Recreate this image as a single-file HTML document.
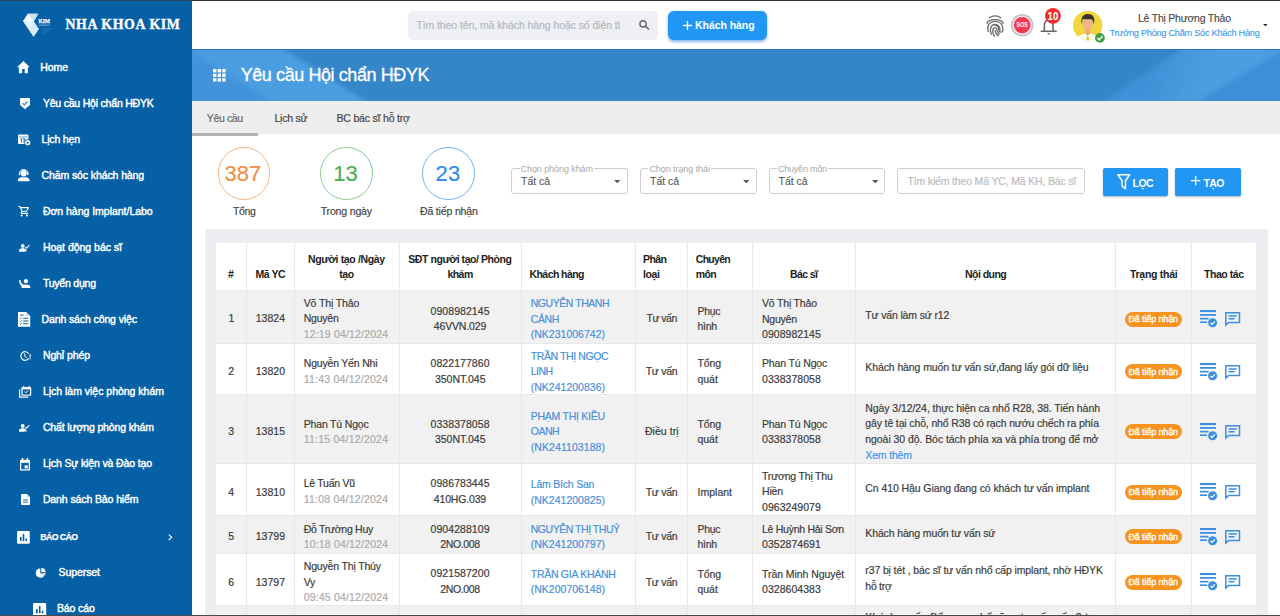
<!DOCTYPE html>
<html lang="vi">
<head>
<meta charset="utf-8">
<title>Yêu cầu Hội chẩn HĐYK</title>
<style>
*{box-sizing:border-box;margin:0;padding:0}
html,body{width:1280px;height:616px;overflow:hidden;background:#fff;font-family:"Liberation Sans",sans-serif;color:#333}
#app{position:relative;width:1280px;height:616px;overflow:hidden;background:#fff}
.abs{position:absolute}
.t{position:absolute;white-space:nowrap;line-height:16px;height:16px}
svg{position:absolute;overflow:visible}

</style>
</head>
<body>
<div id="app">
<div class="abs" style="left:0px;top:0px;width:192px;height:616px;background:#0560a6;"></div>
<div class="abs" style="left:192px;top:49px;width:1088px;height:51.6px;background:#3586c9;overflow:hidden"><svg width="1088" height="51" viewBox="0 0 1088 51" style="left:0;top:0"><defs><filter id="bl" x="-5%" y="-50%" width="110%" height="200%"><feGaussianBlur stdDeviation="2.2"/></filter><linearGradient id="gl" gradientUnits="userSpaceOnUse" x1="60" y1="30" x2="110" y2="10"><stop offset="0" stop-color="#4c9ee2"/><stop offset="1" stop-color="#3f90d6"/></linearGradient><linearGradient id="gr" gradientUnits="userSpaceOnUse" x1="960" y1="20" x2="1010" y2="40"><stop offset="0" stop-color="#4091d7"/><stop offset="1" stop-color="#4c9ee2"/></linearGradient></defs><g filter="url(#bl)"><polygon points="-10,-10 76,-10 180,56 -10,56" fill="#4b9de1"/><polygon points="-10,-4 85,56 -10,56" fill="#4394da"/><polygon points="907,56 998,-6 1100,-6 1100,56" fill="url(#gr)"/><polygon points="1000,56 1100,-4 1100,56" fill="#3e8fd7"/></g></svg></div>
<div class="abs" style="left:192px;top:49px;width:1088px;height:1px;background:#2f78b8;"></div>
<div class="abs" style="left:192px;top:100.6px;width:1088px;height:33.8px;background:#eeeeee;"></div>
<div class="abs" style="left:192px;top:133.4px;width:66px;height:2.4px;background:#b2b2b2;"></div>
<div class="abs" style="left:204.5px;top:228.5px;width:1063px;height:400px;background:#eceef1;"></div>
<div class="t " style="left:65.40px;top:17.00px;font-size:13.8px;color:#fff;letter-spacing:0.651px;font-weight:700;font-family:'Liberation Serif',serif;-webkit-text-stroke:0.35px #fff;">NHA KHOA KIM</div>
<div class="t " style="left:40.30px;top:59.00px;font-size:10.5px;color:#fff;letter-spacing:-0.092px;-webkit-text-stroke:0.42px #fff;">Home</div>
<div class="t " style="left:42.90px;top:95.00px;font-size:10.5px;color:#fff;letter-spacing:-0.204px;-webkit-text-stroke:0.42px #fff;">Yêu cầu Hội chẩn HĐYK</div>
<div class="t " style="left:41.50px;top:131.00px;font-size:10.5px;color:#fff;letter-spacing:-0.171px;-webkit-text-stroke:0.42px #fff;">Lịch hẹn</div>
<div class="t " style="left:41.50px;top:167.00px;font-size:10.5px;color:#fff;letter-spacing:-0.099px;-webkit-text-stroke:0.42px #fff;">Chăm sóc khách hàng</div>
<div class="t " style="left:42.90px;top:203.00px;font-size:10.5px;color:#fff;letter-spacing:-0.021px;-webkit-text-stroke:0.42px #fff;">Đơn hàng Implant/Labo</div>
<div class="t " style="left:42.90px;top:239.00px;font-size:10.5px;color:#fff;letter-spacing:-0.019px;-webkit-text-stroke:0.42px #fff;">Hoạt động bác sĩ</div>
<div class="t " style="left:42.90px;top:275.00px;font-size:10.5px;color:#fff;letter-spacing:-0.219px;-webkit-text-stroke:0.42px #fff;">Tuyển dụng</div>
<div class="t " style="left:41.50px;top:311.00px;font-size:10.5px;color:#fff;letter-spacing:-0.110px;-webkit-text-stroke:0.42px #fff;">Danh sách công việc</div>
<div class="t " style="left:42.90px;top:347.00px;font-size:10.5px;color:#fff;letter-spacing:-0.096px;-webkit-text-stroke:0.42px #fff;">Nghỉ phép</div>
<div class="t " style="left:42.90px;top:383.00px;font-size:10.5px;color:#fff;letter-spacing:-0.013px;-webkit-text-stroke:0.42px #fff;">Lịch làm việc phòng khám</div>
<div class="t " style="left:42.90px;top:419.00px;font-size:10.5px;color:#fff;letter-spacing:-0.132px;-webkit-text-stroke:0.42px #fff;">Chất lượng phòng khám</div>
<div class="t " style="left:42.90px;top:455.00px;font-size:10.5px;color:#fff;letter-spacing:-0.136px;-webkit-text-stroke:0.42px #fff;">Lịch Sự kiện và Đào tạo</div>
<div class="t " style="left:42.90px;top:491.00px;font-size:10.5px;color:#fff;letter-spacing:-0.105px;-webkit-text-stroke:0.42px #fff;">Danh sách Bảo hiểm</div>
<div class="t " style="left:40.30px;top:529.00px;font-size:8.8px;color:#fff;letter-spacing:-0.609px;font-weight:700;-webkit-text-stroke:0.25px #fff;">BÁO CÁO</div>
<div class="t " style="left:58.50px;top:563.80px;font-size:10.5px;color:#fff;letter-spacing:-0.075px;-webkit-text-stroke:0.42px #fff;">Superset</div>
<div class="t " style="left:56.90px;top:600.00px;font-size:10.5px;color:#fff;letter-spacing:-0.105px;-webkit-text-stroke:0.42px #fff;">Báo cáo</div>
<div class="abs" style="left:408px;top:11px;width:250px;height:29px;background:#eef0f5;border-radius:5px;"></div>
<div class="t " style="left:416.30px;top:17.00px;font-size:10.5px;color:#b4b8bd;letter-spacing:-0.084px;-webkit-text-stroke:0.18px #b4b8bd;">Tìm theo tên, mã khách hàng hoặc số điện tl</div>
<div class="abs" style="left:668px;top:10.8px;width:99px;height:29.5px;background:#2196f3;border-radius:6px;box-shadow:0 1.5px 3px rgba(33,120,220,.55);"></div>
<div class="t " style="left:695.00px;top:17.00px;font-size:10.5px;color:#fff;letter-spacing:-0.054px;font-weight:700;">Khách hàng</div>
<div class="t " style="left:1138.00px;top:10.00px;font-size:10.5px;color:#444;letter-spacing:-0.236px;-webkit-text-stroke:0.1px #444;">Lê Thị Phương Thảo</div>
<div class="t " style="left:1109.50px;top:25.00px;font-size:9.2px;color:#3a98ea;letter-spacing:-0.262px;-webkit-text-stroke:0.1px #3a98ea;">Trưởng Phòng Chăm Sóc Khách Hàng</div>
<div class="t " style="left:240.70px;top:67.00px;font-size:18px;color:#fff;letter-spacing:-0.416px;-webkit-text-stroke:0.3px #fff;line-height:24px;height:24px;margin-top:-4px;">Yêu cầu Hội chẩn HĐYK</div>
<div class="t " style="left:206.80px;top:109.70px;font-size:10.5px;color:#666;letter-spacing:-0.355px;-webkit-text-stroke:0.18px #666;">Yêu cầu</div>
<div class="t " style="left:274.50px;top:109.70px;font-size:10.5px;color:#444;letter-spacing:-0.243px;-webkit-text-stroke:0.18px #444;">Lịch sử</div>
<div class="t " style="left:336.50px;top:109.70px;font-size:10.5px;color:#444;letter-spacing:-0.189px;-webkit-text-stroke:0.18px #444;">BC bác sĩ hỗ trợ</div>
<div class="abs" style="left:217.75px;top:147.25px;width:52.5px;height:52.5px;border:1px solid #ef8f45;opacity:.65;border-radius:50%"></div>
<div class="t " style="left:224.60px;top:166.20px;font-size:22px;color:#ef8f45;letter-spacing:-0.036px;-webkit-text-stroke:0.18px #ef8f45;line-height:30px;height:30px;margin-top:-7px;">387</div>
<div class="t " style="left:233.00px;top:203.00px;font-size:10.5px;color:#444;letter-spacing:-0.332px;-webkit-text-stroke:0.18px #444;">Tổng</div>
<div class="abs" style="left:320.0px;top:147.25px;width:52.5px;height:52.5px;border:1px solid #4caf50;opacity:.65;border-radius:50%"></div>
<div class="t " style="left:333.20px;top:166.20px;font-size:22px;color:#4caf50;letter-spacing:-0.036px;-webkit-text-stroke:0.18px #4caf50;line-height:30px;height:30px;margin-top:-7px;">13</div>
<div class="t " style="left:320.75px;top:203.00px;font-size:10.5px;color:#444;letter-spacing:-0.164px;-webkit-text-stroke:0.18px #444;">Trong ngày</div>
<div class="abs" style="left:422.0px;top:147.25px;width:52.5px;height:52.5px;border:1px solid #2e8be6;opacity:.65;border-radius:50%"></div>
<div class="t " style="left:435.60px;top:166.20px;font-size:22px;color:#2e8be6;letter-spacing:0.204px;-webkit-text-stroke:0.18px #2e8be6;line-height:30px;height:30px;margin-top:-7px;">23</div>
<div class="t " style="left:420.00px;top:203.00px;font-size:10.5px;color:#444;letter-spacing:-0.163px;-webkit-text-stroke:0.18px #444;">Đã tiếp nhận</div>
<div class="abs" style="left:511.25px;top:168.4px;width:116.25px;height:25.2px;border:1px solid #cdcdcd;border-radius:3px"></div>
<div class="abs" style="left:519.6px;top:167px;width:74.39999999999998px;height:4px;background:#fff;"></div>
<div class="t " style="left:520.60px;top:161.40px;font-size:9px;color:#adadad;letter-spacing:-0.083px;-webkit-text-stroke:0.05px #adadad;">Chọn phòng khám</div>
<div class="t " style="left:521.00px;top:173.00px;font-size:10.5px;color:#555;letter-spacing:-0.036px;-webkit-text-stroke:0.1px #555;">Tất cả</div>
<svg style="left:614.0px;top:179.7px" width="6.5" height="3.2" viewBox="0 0 10 5"><path d="M0 0h10L5 5z" fill="#555"/></svg>
<div class="abs" style="left:640.3px;top:168.4px;width:116.25px;height:25.2px;border:1px solid #cdcdcd;border-radius:3px"></div>
<div class="abs" style="left:648.4px;top:167px;width:62.60000000000002px;height:4px;background:#fff;"></div>
<div class="t " style="left:649.40px;top:161.40px;font-size:9px;color:#adadad;letter-spacing:-0.067px;-webkit-text-stroke:0.05px #adadad;">Chọn trạng thái</div>
<div class="t " style="left:650.05px;top:173.00px;font-size:10.5px;color:#555;letter-spacing:-0.036px;-webkit-text-stroke:0.1px #555;">Tất cả</div>
<svg style="left:743.05px;top:179.7px" width="6.5" height="3.2" viewBox="0 0 10 5"><path d="M0 0h10L5 5z" fill="#555"/></svg>
<div class="abs" style="left:768.75px;top:168.4px;width:116.25px;height:25.2px;border:1px solid #cdcdcd;border-radius:3px"></div>
<div class="abs" style="left:777px;top:167px;width:51px;height:4px;background:#fff;"></div>
<div class="t " style="left:778.00px;top:161.40px;font-size:9px;color:#adadad;letter-spacing:-0.226px;-webkit-text-stroke:0.05px #adadad;">Chuyên môn</div>
<div class="t " style="left:778.50px;top:173.00px;font-size:10.5px;color:#555;letter-spacing:-0.036px;-webkit-text-stroke:0.1px #555;">Tất cả</div>
<svg style="left:871.5px;top:179.7px" width="6.5" height="3.2" viewBox="0 0 10 5"><path d="M0 0h10L5 5z" fill="#555"/></svg>
<div class="abs" style="left:897.2px;top:168.4px;width:187.5px;height:25.2px;border:1px solid #cdcdcd;border-radius:3px"></div>
<div class="t " style="left:907.50px;top:173.00px;font-size:10.5px;color:#bbb;letter-spacing:-0.168px;-webkit-text-stroke:0.18px #bbb;">Tìm kiếm theo Mã YC, Mã KH, Bác sĩ</div>
<div class="abs" style="left:1102.8px;top:168px;width:65.6px;height:27.5px;background:#2196f3;border-radius:2px;box-shadow:0 1px 2px rgba(0,0,0,.3);"></div>
<div class="abs" style="left:1174.7px;top:168px;width:65.9px;height:27.5px;background:#2196f3;border-radius:2px;box-shadow:0 1px 2px rgba(0,0,0,.3);"></div>
<div class="t " style="left:1132.60px;top:175.00px;font-size:10.5px;color:#fff;letter-spacing:-0.570px;font-weight:700;">LỌC</div>
<div class="t " style="left:1203.40px;top:175.00px;font-size:10.5px;color:#fff;letter-spacing:-0.570px;font-weight:700;">TẠO</div>
<div class="abs" style="left:215.75px;top:243px;width:1040.5px;height:47px;background:#fff;"></div>
<div class="abs" style="left:215.75px;top:290px;width:1040.5px;height:53px;background:#f1f1f1;"></div>
<div class="abs" style="left:215.75px;top:343px;width:1040.5px;height:51.75px;background:#fff;"></div>
<div class="abs" style="left:215.75px;top:394.75px;width:1040.5px;height:68.64999999999998px;background:#f1f1f1;"></div>
<div class="abs" style="left:215.75px;top:463.4px;width:1040.5px;height:51.89999999999998px;background:#fff;"></div>
<div class="abs" style="left:215.75px;top:515.3px;width:1040.5px;height:37.700000000000045px;background:#f1f1f1;"></div>
<div class="abs" style="left:215.75px;top:553px;width:1040.5px;height:52.39999999999998px;background:#fff;"></div>
<div class="abs" style="left:215.75px;top:605.4px;width:1040.5px;height:54.60000000000002px;background:#f1f1f1;"></div>
<div class="abs" style="left:245.75px;top:243px;width:1px;height:400px;background:#e8e8e8;"></div>
<div class="abs" style="left:294.0px;top:243px;width:1px;height:400px;background:#e8e8e8;"></div>
<div class="abs" style="left:398.75px;top:243px;width:1px;height:400px;background:#e8e8e8;"></div>
<div class="abs" style="left:520.75px;top:243px;width:1px;height:400px;background:#e8e8e8;"></div>
<div class="abs" style="left:634.5px;top:243px;width:1px;height:400px;background:#e8e8e8;"></div>
<div class="abs" style="left:687.0px;top:243px;width:1px;height:400px;background:#e8e8e8;"></div>
<div class="abs" style="left:752.0px;top:243px;width:1px;height:400px;background:#e8e8e8;"></div>
<div class="abs" style="left:854.5px;top:243px;width:1px;height:400px;background:#e8e8e8;"></div>
<div class="abs" style="left:1115.0px;top:243px;width:1px;height:400px;background:#e8e8e8;"></div>
<div class="abs" style="left:1190.5px;top:243px;width:1px;height:400px;background:#e8e8e8;"></div>
<div class="abs" style="left:215.75px;top:289.5px;width:1040.5px;height:1px;background:#e8e8e8;"></div>
<div class="abs" style="left:215.75px;top:342.5px;width:1040.5px;height:1px;background:#e8e8e8;"></div>
<div class="abs" style="left:215.75px;top:394.25px;width:1040.5px;height:1px;background:#e8e8e8;"></div>
<div class="abs" style="left:215.75px;top:462.9px;width:1040.5px;height:1px;background:#e8e8e8;"></div>
<div class="abs" style="left:215.75px;top:514.8px;width:1040.5px;height:1px;background:#e8e8e8;"></div>
<div class="abs" style="left:215.75px;top:552.5px;width:1040.5px;height:1px;background:#e8e8e8;"></div>
<div class="abs" style="left:215.75px;top:604.9px;width:1040.5px;height:1px;background:#e8e8e8;"></div>
<div class="t " style="left:228.00px;top:266.25px;font-size:10.5px;color:#222;font-weight:700;">#</div>
<div class="t " style="left:255.50px;top:266.25px;font-size:10.5px;color:#222;letter-spacing:-0.475px;font-weight:700;">Mã YC</div>
<div class="t " style="left:308.00px;top:250.75px;font-size:10.5px;color:#222;letter-spacing:-0.369px;font-weight:700;">Người tạo /Ngày</div>
<div class="t " style="left:339.25px;top:266.25px;font-size:10.5px;color:#222;letter-spacing:-0.375px;font-weight:700;">tạo</div>
<div class="t " style="left:408.25px;top:250.75px;font-size:10.5px;color:#222;letter-spacing:-0.429px;font-weight:700;">SĐT người tạo/ Phòng</div>
<div class="t " style="left:447.50px;top:266.25px;font-size:10.5px;color:#222;letter-spacing:-0.570px;font-weight:700;">khám</div>
<div class="t " style="left:529.50px;top:266.25px;font-size:10.5px;color:#222;letter-spacing:-0.566px;font-weight:700;">Khách hàng</div>
<div class="t " style="left:643.00px;top:250.75px;font-size:10.5px;color:#222;letter-spacing:-0.570px;font-weight:700;">Phân</div>
<div class="t " style="left:643.00px;top:266.25px;font-size:10.5px;color:#222;letter-spacing:-0.363px;font-weight:700;">loại</div>
<div class="t " style="left:695.75px;top:250.75px;font-size:10.5px;color:#222;letter-spacing:-0.701px;font-weight:700;">Chuyên</div>
<div class="t " style="left:695.75px;top:266.25px;font-size:10.5px;color:#222;letter-spacing:-0.570px;font-weight:700;">môn</div>
<div class="t " style="left:790.00px;top:266.25px;font-size:10.5px;color:#222;letter-spacing:-0.588px;font-weight:700;">Bác sĩ</div>
<div class="t " style="left:965.00px;top:266.25px;font-size:10.5px;color:#222;letter-spacing:-0.534px;font-weight:700;">Nội dung</div>
<div class="t " style="left:1130.00px;top:266.25px;font-size:10.5px;color:#222;letter-spacing:-0.286px;font-weight:700;">Trạng thái</div>
<div class="t " style="left:1204.00px;top:266.25px;font-size:10.5px;color:#222;letter-spacing:-0.454px;font-weight:700;">Thao tác</div>
<div class="t " style="left:228.60px;top:309.60px;font-size:10.5px;color:#3a3a3a;-webkit-text-stroke:0.18px #3a3a3a;">1</div>
<div class="t " style="left:255.75px;top:309.60px;font-size:10.5px;color:#3a3a3a;letter-spacing:0.013px;-webkit-text-stroke:0.18px #3a3a3a;">13824</div>
<div class="t " style="left:303.75px;top:294.90px;font-size:10.5px;color:#3a3a3a;letter-spacing:-0.132px;-webkit-text-stroke:0.18px #3a3a3a;">Võ Thị Thảo</div>
<div class="t " style="left:303.75px;top:310.10px;font-size:10.5px;color:#3a3a3a;letter-spacing:-0.238px;-webkit-text-stroke:0.18px #3a3a3a;">Nguyên</div>
<div class="t " style="left:303.75px;top:326.25px;font-size:10.5px;color:#aaa;letter-spacing:0.167px;-webkit-text-stroke:0.18px #aaa;">12:19 04/12/2024</div>
<div class="t " style="left:430.50px;top:302.75px;font-size:10.5px;color:#3a3a3a;letter-spacing:0.067px;-webkit-text-stroke:0.18px #3a3a3a;">0908982145</div>
<div class="t " style="left:433.75px;top:318.25px;font-size:10.5px;color:#3a3a3a;letter-spacing:-0.151px;-webkit-text-stroke:0.18px #3a3a3a;">46VVN.029</div>
<div class="t " style="left:530.75px;top:295.25px;font-size:10.5px;color:#4790da;letter-spacing:-0.460px;-webkit-text-stroke:0.18px #4790da;">NGUYỄN THANH</div>
<div class="t " style="left:530.75px;top:310.75px;font-size:10.5px;color:#4790da;letter-spacing:-0.417px;-webkit-text-stroke:0.18px #4790da;">CẢNH</div>
<div class="t " style="left:530.75px;top:326.25px;font-size:10.5px;color:#4790da;letter-spacing:0.009px;-webkit-text-stroke:0.18px #4790da;">(NK231006742)</div>
<div class="t " style="left:646.60px;top:309.60px;font-size:10.5px;color:#3a3a3a;letter-spacing:-0.528px;-webkit-text-stroke:0.18px #3a3a3a;">Tư vấn</div>
<div class="t " style="left:697.50px;top:302.75px;font-size:10.5px;color:#3a3a3a;letter-spacing:-0.311px;-webkit-text-stroke:0.18px #3a3a3a;">Phục</div>
<div class="t " style="left:697.50px;top:318.25px;font-size:10.5px;color:#3a3a3a;letter-spacing:-0.270px;-webkit-text-stroke:0.18px #3a3a3a;">hình</div>
<div class="t " style="left:762.00px;top:295.25px;font-size:10.5px;color:#3a3a3a;letter-spacing:-0.182px;-webkit-text-stroke:0.18px #3a3a3a;">Võ Thị Thảo</div>
<div class="t " style="left:762.00px;top:310.75px;font-size:10.5px;color:#3a3a3a;letter-spacing:-0.238px;-webkit-text-stroke:0.18px #3a3a3a;">Nguyên</div>
<div class="t " style="left:762.00px;top:326.25px;font-size:10.5px;color:#3a3a3a;letter-spacing:0.039px;-webkit-text-stroke:0.18px #3a3a3a;">0908982145</div>
<div class="t " style="left:865.30px;top:307.00px;font-size:10.5px;color:#3a3a3a;letter-spacing:-0.154px;-webkit-text-stroke:0.18px #3a3a3a;">Tư vấn làm sứ r12</div>
<div class="abs" style="left:1124.75px;top:311.5px;width:57.2px;height:15px;background:#f7931e;border-radius:8px;"></div>
<div class="t " style="left:1128.50px;top:311.00px;font-size:9px;color:#fff;letter-spacing:-0.140px;-webkit-text-stroke:0.3px #fff;">Đã tiếp nhận</div>
<div class="t " style="left:228.25px;top:363.00px;font-size:10.5px;color:#3a3a3a;-webkit-text-stroke:0.18px #3a3a3a;">2</div>
<div class="t " style="left:255.75px;top:363.00px;font-size:10.5px;color:#3a3a3a;letter-spacing:0.013px;-webkit-text-stroke:0.18px #3a3a3a;">13820</div>
<div class="t " style="left:303.75px;top:355.00px;font-size:10.5px;color:#3a3a3a;letter-spacing:-0.194px;-webkit-text-stroke:0.18px #3a3a3a;">Nguyễn Yến Nhi</div>
<div class="t " style="left:303.75px;top:371.00px;font-size:10.5px;color:#aaa;letter-spacing:0.219px;-webkit-text-stroke:0.18px #aaa;">11:43 04/12/2024</div>
<div class="t " style="left:430.50px;top:355.00px;font-size:10.5px;color:#3a3a3a;letter-spacing:0.067px;-webkit-text-stroke:0.18px #3a3a3a;">0822177860</div>
<div class="t " style="left:435.00px;top:371.00px;font-size:10.5px;color:#3a3a3a;letter-spacing:-0.036px;-webkit-text-stroke:0.18px #3a3a3a;">350NT.045</div>
<div class="t " style="left:530.75px;top:347.50px;font-size:10.5px;color:#4790da;letter-spacing:-0.408px;-webkit-text-stroke:0.18px #4790da;">TRẦN THỊ NGỌC</div>
<div class="t " style="left:530.75px;top:363.00px;font-size:10.5px;color:#4790da;letter-spacing:-0.520px;-webkit-text-stroke:0.18px #4790da;">LINH</div>
<div class="t " style="left:530.75px;top:378.50px;font-size:10.5px;color:#4790da;letter-spacing:0.009px;-webkit-text-stroke:0.18px #4790da;">(NK241200836)</div>
<div class="t " style="left:645.75px;top:363.00px;font-size:10.5px;color:#3a3a3a;letter-spacing:-0.308px;-webkit-text-stroke:0.18px #3a3a3a;">Tư vấn</div>
<div class="t " style="left:697.50px;top:355.00px;font-size:10.5px;color:#3a3a3a;letter-spacing:-0.092px;-webkit-text-stroke:0.18px #3a3a3a;">Tổng</div>
<div class="t " style="left:697.50px;top:371.00px;font-size:10.5px;color:#3a3a3a;letter-spacing:-0.030px;-webkit-text-stroke:0.18px #3a3a3a;">quát</div>
<div class="t " style="left:762.00px;top:355.00px;font-size:10.5px;color:#3a3a3a;letter-spacing:-0.149px;-webkit-text-stroke:0.18px #3a3a3a;">Phan Tú Ngọc</div>
<div class="t " style="left:762.00px;top:371.00px;font-size:10.5px;color:#3a3a3a;letter-spacing:0.039px;-webkit-text-stroke:0.18px #3a3a3a;">0338378058</div>
<div class="t " style="left:865.30px;top:359.00px;font-size:10.5px;color:#3a3a3a;letter-spacing:-0.101px;-webkit-text-stroke:0.18px #3a3a3a;">Khách hàng muốn tư vấn sứ,đang lấy gói dữ liệu</div>
<div class="abs" style="left:1124.75px;top:364.0px;width:57.2px;height:15px;background:#f7931e;border-radius:8px;"></div>
<div class="t " style="left:1128.50px;top:363.50px;font-size:9px;color:#fff;letter-spacing:-0.140px;-webkit-text-stroke:0.3px #fff;">Đã tiếp nhận</div>
<div class="t " style="left:228.25px;top:423.00px;font-size:10.5px;color:#3a3a3a;-webkit-text-stroke:0.18px #3a3a3a;">3</div>
<div class="t " style="left:255.75px;top:423.00px;font-size:10.5px;color:#3a3a3a;letter-spacing:0.013px;-webkit-text-stroke:0.18px #3a3a3a;">13815</div>
<div class="t " style="left:303.75px;top:415.50px;font-size:10.5px;color:#3a3a3a;letter-spacing:-0.176px;-webkit-text-stroke:0.18px #3a3a3a;">Phan Tú Ngọc</div>
<div class="t " style="left:303.75px;top:431.00px;font-size:10.5px;color:#aaa;letter-spacing:0.219px;-webkit-text-stroke:0.18px #aaa;">11:15 04/12/2024</div>
<div class="t " style="left:430.50px;top:415.50px;font-size:10.5px;color:#3a3a3a;letter-spacing:0.067px;-webkit-text-stroke:0.18px #3a3a3a;">0338378058</div>
<div class="t " style="left:435.00px;top:431.00px;font-size:10.5px;color:#3a3a3a;letter-spacing:-0.036px;-webkit-text-stroke:0.18px #3a3a3a;">350NT.045</div>
<div class="t " style="left:530.75px;top:407.50px;font-size:10.5px;color:#4790da;letter-spacing:-0.263px;-webkit-text-stroke:0.18px #4790da;">PHẠM THỊ KIỀU</div>
<div class="t " style="left:530.75px;top:423.00px;font-size:10.5px;color:#4790da;letter-spacing:-0.520px;-webkit-text-stroke:0.18px #4790da;">OANH</div>
<div class="t " style="left:530.75px;top:438.50px;font-size:10.5px;color:#4790da;letter-spacing:0.074px;-webkit-text-stroke:0.18px #4790da;">(NK241103188)</div>
<div class="t " style="left:645.00px;top:423.00px;font-size:10.5px;color:#3a3a3a;letter-spacing:0.035px;-webkit-text-stroke:0.18px #3a3a3a;">Điều trị</div>
<div class="t " style="left:697.50px;top:415.50px;font-size:10.5px;color:#3a3a3a;letter-spacing:-0.092px;-webkit-text-stroke:0.18px #3a3a3a;">Tổng</div>
<div class="t " style="left:697.50px;top:431.00px;font-size:10.5px;color:#3a3a3a;letter-spacing:-0.030px;-webkit-text-stroke:0.18px #3a3a3a;">quát</div>
<div class="t " style="left:762.00px;top:415.50px;font-size:10.5px;color:#3a3a3a;letter-spacing:-0.149px;-webkit-text-stroke:0.18px #3a3a3a;">Phan Tú Ngọc</div>
<div class="t " style="left:762.00px;top:431.00px;font-size:10.5px;color:#3a3a3a;letter-spacing:0.039px;-webkit-text-stroke:0.18px #3a3a3a;">0338378058</div>
<div class="t " style="left:865.30px;top:399.70px;font-size:10.5px;color:#3a3a3a;letter-spacing:-0.073px;-webkit-text-stroke:0.18px #3a3a3a;">Ngày 3/12/24, thực hiện ca nhổ R28, 38. Tiến hành</div>
<div class="t " style="left:865.30px;top:415.30px;font-size:10.5px;color:#3a3a3a;letter-spacing:-0.137px;-webkit-text-stroke:0.18px #3a3a3a;">gây tê tại chỗ, nhổ R38 có rạch nướu chếch ra phía</div>
<div class="t " style="left:865.30px;top:431.00px;font-size:10.5px;color:#3a3a3a;letter-spacing:-0.065px;-webkit-text-stroke:0.18px #3a3a3a;">ngoài 30 độ. Bóc tách phía xa và phía trong để mở</div>
<div class="t " style="left:865.30px;top:446.60px;font-size:10.5px;color:#3a96ee;letter-spacing:-0.165px;-webkit-text-stroke:0.18px #3a96ee;">Xem thêm</div>
<div class="abs" style="left:1124.75px;top:424.3px;width:57.2px;height:15px;background:#f7931e;border-radius:8px;"></div>
<div class="t " style="left:1128.50px;top:423.80px;font-size:9px;color:#fff;letter-spacing:-0.140px;-webkit-text-stroke:0.3px #fff;">Đã tiếp nhận</div>
<div class="t " style="left:228.25px;top:483.50px;font-size:10.5px;color:#3a3a3a;-webkit-text-stroke:0.18px #3a3a3a;">4</div>
<div class="t " style="left:255.75px;top:483.50px;font-size:10.5px;color:#3a3a3a;letter-spacing:0.013px;-webkit-text-stroke:0.18px #3a3a3a;">13810</div>
<div class="t " style="left:303.75px;top:475.30px;font-size:10.5px;color:#3a3a3a;letter-spacing:-0.274px;-webkit-text-stroke:0.18px #3a3a3a;">Lê Tuấn Vũ</div>
<div class="t " style="left:303.75px;top:491.40px;font-size:10.5px;color:#aaa;letter-spacing:0.219px;-webkit-text-stroke:0.18px #aaa;">11:08 04/12/2024</div>
<div class="t " style="left:430.50px;top:475.30px;font-size:10.5px;color:#3a3a3a;letter-spacing:0.067px;-webkit-text-stroke:0.18px #3a3a3a;">0986783445</div>
<div class="t " style="left:433.80px;top:491.40px;font-size:10.5px;color:#3a3a3a;letter-spacing:-0.163px;-webkit-text-stroke:0.18px #3a3a3a;">410HG.039</div>
<div class="t " style="left:530.75px;top:475.60px;font-size:10.5px;color:#4790da;letter-spacing:-0.210px;-webkit-text-stroke:0.18px #4790da;">Lâm Bích San</div>
<div class="t " style="left:530.75px;top:491.50px;font-size:10.5px;color:#4790da;letter-spacing:0.009px;-webkit-text-stroke:0.18px #4790da;">(NK241200825)</div>
<div class="t " style="left:645.75px;top:483.80px;font-size:10.5px;color:#3a3a3a;letter-spacing:-0.308px;-webkit-text-stroke:0.18px #3a3a3a;">Tư vấn</div>
<div class="t " style="left:697.50px;top:483.80px;font-size:10.5px;color:#3a3a3a;letter-spacing:0.011px;-webkit-text-stroke:0.18px #3a3a3a;">Implant</div>
<div class="t " style="left:762.00px;top:467.70px;font-size:10.5px;color:#3a3a3a;letter-spacing:-0.189px;-webkit-text-stroke:0.18px #3a3a3a;">Trương Thị Thu</div>
<div class="t " style="left:762.00px;top:483.30px;font-size:10.5px;color:#3a3a3a;letter-spacing:-0.198px;-webkit-text-stroke:0.18px #3a3a3a;">Hiền</div>
<div class="t " style="left:762.00px;top:498.90px;font-size:10.5px;color:#3a3a3a;letter-spacing:0.039px;-webkit-text-stroke:0.18px #3a3a3a;">0963249079</div>
<div class="t " style="left:865.30px;top:479.50px;font-size:10.5px;color:#3a3a3a;letter-spacing:-0.081px;-webkit-text-stroke:0.18px #3a3a3a;">Cn 410 Hậu Giang đang có khách tư vấn implant</div>
<div class="abs" style="left:1124.75px;top:484.5px;width:57.2px;height:15px;background:#f7931e;border-radius:8px;"></div>
<div class="t " style="left:1128.50px;top:484.00px;font-size:9px;color:#fff;letter-spacing:-0.140px;-webkit-text-stroke:0.3px #fff;">Đã tiếp nhận</div>
<div class="t " style="left:228.25px;top:528.00px;font-size:10.5px;color:#3a3a3a;-webkit-text-stroke:0.18px #3a3a3a;">5</div>
<div class="t " style="left:255.75px;top:528.00px;font-size:10.5px;color:#3a3a3a;letter-spacing:0.013px;-webkit-text-stroke:0.18px #3a3a3a;">13799</div>
<div class="t " style="left:303.75px;top:520.70px;font-size:10.5px;color:#3a3a3a;letter-spacing:-0.284px;-webkit-text-stroke:0.18px #3a3a3a;">Đỗ Trường Huy</div>
<div class="t " style="left:303.75px;top:536.30px;font-size:10.5px;color:#aaa;letter-spacing:0.167px;-webkit-text-stroke:0.18px #aaa;">10:18 04/12/2024</div>
<div class="t " style="left:430.50px;top:520.70px;font-size:10.5px;color:#3a3a3a;letter-spacing:0.067px;-webkit-text-stroke:0.18px #3a3a3a;">0904288109</div>
<div class="t " style="left:440.30px;top:536.30px;font-size:10.5px;color:#3a3a3a;letter-spacing:-0.388px;-webkit-text-stroke:0.18px #3a3a3a;">2NO.008</div>
<div class="t " style="left:530.75px;top:520.60px;font-size:10.5px;color:#4790da;letter-spacing:-0.473px;-webkit-text-stroke:0.18px #4790da;">NGUYỄN THỊ THUỶ</div>
<div class="t " style="left:530.75px;top:536.00px;font-size:10.5px;color:#4790da;letter-spacing:0.009px;-webkit-text-stroke:0.18px #4790da;">(NK241200797)</div>
<div class="t " style="left:645.75px;top:528.00px;font-size:10.5px;color:#3a3a3a;letter-spacing:-0.308px;-webkit-text-stroke:0.18px #3a3a3a;">Tư vấn</div>
<div class="t " style="left:697.50px;top:520.60px;font-size:10.5px;color:#3a3a3a;letter-spacing:-0.311px;-webkit-text-stroke:0.18px #3a3a3a;">Phục</div>
<div class="t " style="left:697.50px;top:536.00px;font-size:10.5px;color:#3a3a3a;letter-spacing:-0.270px;-webkit-text-stroke:0.18px #3a3a3a;">hình</div>
<div class="t " style="left:762.00px;top:520.80px;font-size:10.5px;color:#3a3a3a;letter-spacing:-0.271px;-webkit-text-stroke:0.18px #3a3a3a;">Lê Huỳnh Hải Sơn</div>
<div class="t " style="left:762.00px;top:536.00px;font-size:10.5px;color:#3a3a3a;letter-spacing:0.039px;-webkit-text-stroke:0.18px #3a3a3a;">0352874691</div>
<div class="t " style="left:865.30px;top:524.60px;font-size:10.5px;color:#3a3a3a;letter-spacing:-0.131px;-webkit-text-stroke:0.18px #3a3a3a;">Khách hàng muốn tư vấn sứ</div>
<div class="abs" style="left:1124.75px;top:529.3px;width:57.2px;height:15px;background:#f7931e;border-radius:8px;"></div>
<div class="t " style="left:1128.50px;top:528.80px;font-size:9px;color:#fff;letter-spacing:-0.140px;-webkit-text-stroke:0.3px #fff;">Đã tiếp nhận</div>
<div class="t " style="left:228.25px;top:573.50px;font-size:10.5px;color:#3a3a3a;-webkit-text-stroke:0.18px #3a3a3a;">6</div>
<div class="t " style="left:255.75px;top:573.50px;font-size:10.5px;color:#3a3a3a;letter-spacing:0.013px;-webkit-text-stroke:0.18px #3a3a3a;">13797</div>
<div class="t " style="left:303.75px;top:557.60px;font-size:10.5px;color:#3a3a3a;letter-spacing:-0.166px;-webkit-text-stroke:0.18px #3a3a3a;">Nguyễn Thị Thúy</div>
<div class="t " style="left:303.75px;top:573.50px;font-size:10.5px;color:#3a3a3a;letter-spacing:-0.395px;-webkit-text-stroke:0.18px #3a3a3a;">Vy</div>
<div class="t " style="left:303.75px;top:589.00px;font-size:10.5px;color:#aaa;letter-spacing:0.167px;-webkit-text-stroke:0.18px #aaa;">09:45 04/12/2024</div>
<div class="t " style="left:430.50px;top:565.40px;font-size:10.5px;color:#3a3a3a;letter-spacing:0.067px;-webkit-text-stroke:0.18px #3a3a3a;">0921587200</div>
<div class="t " style="left:440.30px;top:581.20px;font-size:10.5px;color:#3a3a3a;letter-spacing:-0.388px;-webkit-text-stroke:0.18px #3a3a3a;">2NO.008</div>
<div class="t " style="left:530.75px;top:565.50px;font-size:10.5px;color:#4790da;letter-spacing:-0.279px;-webkit-text-stroke:0.18px #4790da;">TRẦN GIA KHÁNH</div>
<div class="t " style="left:530.75px;top:581.40px;font-size:10.5px;color:#4790da;letter-spacing:0.009px;-webkit-text-stroke:0.18px #4790da;">(NK200706148)</div>
<div class="t " style="left:645.75px;top:573.50px;font-size:10.5px;color:#3a3a3a;letter-spacing:-0.308px;-webkit-text-stroke:0.18px #3a3a3a;">Tư vấn</div>
<div class="t " style="left:697.50px;top:565.50px;font-size:10.5px;color:#3a3a3a;letter-spacing:-0.092px;-webkit-text-stroke:0.18px #3a3a3a;">Tổng</div>
<div class="t " style="left:697.50px;top:581.40px;font-size:10.5px;color:#3a3a3a;letter-spacing:-0.030px;-webkit-text-stroke:0.18px #3a3a3a;">quát</div>
<div class="t " style="left:762.00px;top:565.50px;font-size:10.5px;color:#3a3a3a;letter-spacing:-0.058px;-webkit-text-stroke:0.18px #3a3a3a;">Trần Minh Nguyệt</div>
<div class="t " style="left:762.00px;top:580.70px;font-size:10.5px;color:#3a3a3a;letter-spacing:0.039px;-webkit-text-stroke:0.18px #3a3a3a;">0328604383</div>
<div class="t " style="left:865.30px;top:562.20px;font-size:10.5px;color:#3a3a3a;letter-spacing:-0.123px;-webkit-text-stroke:0.18px #3a3a3a;">r37 bị tét , bác sĩ tư vấn nhổ cấp implant, nhờ HĐYK</div>
<div class="t " style="left:865.30px;top:577.80px;font-size:10.5px;color:#3a3a3a;letter-spacing:-0.259px;-webkit-text-stroke:0.18px #3a3a3a;">hỗ trợ</div>
<div class="abs" style="left:1124.75px;top:574.5px;width:57.2px;height:15px;background:#f7931e;border-radius:8px;"></div>
<div class="t " style="left:1128.50px;top:574.00px;font-size:9px;color:#fff;letter-spacing:-0.140px;-webkit-text-stroke:0.3px #fff;">Đã tiếp nhận</div>
<div class="t " style="left:865.30px;top:608.50px;font-size:10.5px;color:#3a3a3a;letter-spacing:0.280px;-webkit-text-stroke:0.18px #3a3a3a;">Khách muốn Bổ sung nhổ răng tư vấn cấy 2 trụ</div>
<svg style="left:16px;top:8px" width="48" height="36" viewBox="0 0 48 36" ><polygon points="7,13.2 12,5.8 22.2,5.8 17.8,13.5 22.8,21.1 17.5,28.7" fill="#e3f1fc"/><polygon points="12,5.8 22.2,5.8 17.8,13.5" fill="#c9e4f8"/><polygon points="7,13.2 17.8,13.5 12,5.8" fill="#f4faff"/><polygon points="17.8,13.5 22.8,21.1 17.5,28.7 14,20" fill="#d6ebfa"/><polygon points="24.5,20 37.5,20 27.5,27.5" fill="#2a78bd" opacity=".4"/><text x="22.4" y="14.9" font-family="Liberation Serif,serif" font-weight="700" font-size="6.4" fill="#fff" stroke="#fff" stroke-width=".25" textLength="11.6" lengthAdjust="spacingAndGlyphs">KIM</text><rect x="22.5" y="16.7" width="11.4" height="0.8" fill="#cfe4f5" opacity=".7"/></svg>
<svg style="left:16.9px;top:60.9px" width="12.8" height="12.2" viewBox="0 0 12.8 12.2" ><path d="M6.4 0L12.8 6.2H10.9V12.2H7.7V7.9H5.1V12.2H1.9V6.2H0z" fill="#fff"/></svg>
<svg style="left:20px;top:97.8px" width="10" height="11.2" viewBox="0 0 10 11.2" ><path d="M0.8 0h8.4a.8.8 0 0 1 .8.8v6.3L5 11.2 0 7.1V.8A.8.8 0 0 1 .8 0z" fill="#fff"/><path d="M2.6 5.2l1.7 1.7 3.2-3.4" stroke="#3a7fc0" stroke-width="1.2" fill="none"/></svg>
<svg style="left:17.8px;top:133.8px" width="13" height="11.6" viewBox="0 0 13 11.6" ><rect x="0" y="0.4" width="10.4" height="9.6" rx="1" fill="#fff"/><rect x="0.9" y="2.6" width="8.6" height="0.7" fill="#0560a6" opacity=".8"/><path d="M2.400 4.800h1v3.600M4.600 4.800h2.200l-1.300 3.600" stroke="#0560a6" stroke-width=".9" fill="none"/><circle cx="9.700" cy="8.700" r="3.400" fill="#0560a6"/><circle cx="9.700" cy="8.700" r="2.600" fill="#fff"/><path d="M9.700 7.300v2.800M8.300 8.700h2.800" stroke="#0560a6" stroke-width=".8" fill="none"/></svg>
<svg style="left:18.3px;top:169.3px" width="11.4" height="12.2" viewBox="0 0 11.4 12.2" ><circle cx="5.7" cy="4.2" r="3.1" fill="#fff"/><path d="M1.6 4.6a4.1 4.1 0 0 1 8.2 0" stroke="#fff" stroke-width="1" fill="none"/><rect x="0.9" y="3.6" width="1.3" height="2.6" rx=".6" fill="#fff"/><rect x="9.2" y="3.6" width="1.3" height="2.6" rx=".6" fill="#fff"/><path d="M0 12.2v-1.6c0-1.9 3.8-2.9 5.7-2.9s5.7 1 5.7 2.9v1.6z" fill="#fff"/><path d="M3.900 7.700l1.800 1.300 1.800-1.300" stroke="#0560a6" stroke-width=".6" fill="none" opacity=".7"/></svg>
<svg style="left:17.9px;top:204.89999999999998px" width="12.6" height="12.6" viewBox="0 0 24 24" ><path d="M15.55 13c.75 0 1.41-.41 1.75-1.03l3.58-6.49c.37-.66-.11-1.48-.87-1.48H5.21l-.94-2H1v2h2l3.6 7.59-1.35 2.44C4.52 15.37 5.48 17 7 17h12v-2H7l1.1-2h7.45zM6.16 6h12.15l-2.76 5H8.53L6.16 6zM7 18c-1.1 0-1.99.9-1.99 2S5.900 22 7 22s2-.9 2-2-.9-2-2-2zm10 0c-1.1 0-1.99.9-1.99 2s.89 2 1.990 2 2-.9 2-2-.9-2-2-2z" fill="#fff"/></svg>
<svg style="left:19.3px;top:243.6px" width="10.8" height="7.6" viewBox="0 0 10.8 7.6" ><circle cx="3.7" cy="1.9" r="1.9" fill="#fff"/><path d="M0 7.6V6.5C0 5 2.500 4.300 3.700 4.300c1 0 2.600.400 3.300 1.200L5.400 7.600z" fill="#fff"/><path d="M0 7.600h7.600V6.700C7.600 5.300 5 4.500 3.800 4.500S0 5.300 0 6.700z" fill="#fff"/><path d="M6.300 2.900l1.400 1.400L10.300 1" stroke="#fff" stroke-width="1.100" fill="none"/></svg>
<svg style="left:19.3px;top:423.6px" width="10.8" height="7.6" viewBox="0 0 10.8 7.6" ><circle cx="3.7" cy="1.9" r="1.9" fill="#fff"/><path d="M0 7.6V6.5C0 5 2.500 4.300 3.700 4.300c1 0 2.600.400 3.300 1.200L5.400 7.600z" fill="#fff"/><path d="M0 7.600h7.600V6.700C7.600 5.300 5 4.500 3.800 4.500S0 5.300 0 6.700z" fill="#fff"/><path d="M6.300 2.900l1.400 1.400L10.300 1" stroke="#fff" stroke-width="1.100" fill="none"/></svg>
<svg style="left:19.3px;top:278.6px" width="11.3" height="9" viewBox="0 0 11.3 9" ><circle cx="6.900" cy="2.200" r="2.100" fill="#fff"/><path d="M2.600 9V7.300C1.200 6.400.200 4.300 0 1.300L1.500 1c.300 2.300 1.100 3.700 2.300 4.300.900.400 1.900.300 3.100.300 2.100 0 4.400.900 4.400 2.200V9z" fill="#fff"/></svg>
<svg style="left:17.8px;top:311.8px" width="12.2" height="14.8" viewBox="0 0 12.2 14.8" ><path d="M0 0h8.200l4 4v10.800H0z" fill="#fff"/><path d="M8.200 0v4h4" fill="#bcd6ee"/><g stroke="#0560a6" stroke-width="1"><path d="M5.200 6.200h5.200M5.200 9h5.200M5.200 11.800h5.200M2 3.200h3.600"/></g><g stroke="#0560a6" stroke-width=".8" fill="none"><path d="M1.700 6.100l.8.800 1.300-1.500M1.700 8.900l.8.800 1.300-1.500M1.700 11.700l.8.800 1.300-1.500"/></g></svg>
<svg style="left:19.5px;top:350.7px" width="11.2" height="10" viewBox="0 0 11.2 10" ><path d="M8.700 7.400A4.300 4.300 0 1 1 8.700 2.600" stroke="#fff" stroke-width="1.200" fill="none"/><path d="M4.800 2.600v2.700l1.900 1.300" stroke="#fff" stroke-width="1" fill="none"/><rect x="9.600" y="3" width="1.100" height="3.600" fill="#fff"/><rect x="9.600" y="7.300" width="1.100" height="1.200" fill="#fff"/></svg>
<svg style="left:19px;top:385.8px" width="12.2" height="11.8" viewBox="0 0 12.2 11.8" ><path d="M0.600 3.600v7.600h8.600" stroke="#fff" stroke-width="1.200" fill="none"/><rect x="2.400" y="1" width="9.800" height="8.800" rx="1" fill="#fff"/><rect x="4" y="0" width="1.200" height="2" fill="#fff"/><rect x="9.400" y="0" width="1.200" height="2" fill="#fff"/><rect x="3.600" y="3.400" width="7.400" height="5.200" fill="#0560a6"/><path d="M5.700 5.600l1.200 1.200 2-2.200" stroke="#fff" stroke-width="1" fill="none"/></svg>
<svg style="left:20.2px;top:457.8px" width="10" height="12.6" viewBox="0 0 10 12.600" ><rect x="0" y="1.800" width="10" height="10.800" rx="1.200" fill="#fff"/><rect x="1.800" y="0" width="1.400" height="3" fill="#fff"/><rect x="6.800" y="0" width="1.400" height="3" fill="#fff"/><rect x="1.300" y="4.800" width="7.400" height="6.500" fill="#0560a6"/><rect x="4.600" y="7.400" width="3.200" height="3" fill="#fff"/></svg>
<svg style="left:20.6px;top:494px" width="9" height="11" viewBox="0 0 9 11" ><path d="M1.100 0h4.900l3 3v6.900a1.100 1.100 0 0 1-1.100 1.100H1.100A1.100 1.100 0 0 1 0 9.900V1.100A1.100 1.100 0 0 1 1.100 0z" fill="#fff"/><path d="M2 6h5M2 8.200h5" stroke="#0560a6" stroke-width=".9"/><path d="M5.600 .600v2.800h2.800" fill="#cfe2f3"/></svg>
<svg style="left:17px;top:530.6px" width="12.8" height="12.8" viewBox="0 0 13 13" ><rect width="13" height="13" rx="1.400" fill="#fff"/><rect x="3" y="6" width="1.600" height="4.200" fill="#0560a6"/><rect x="5.800" y="3" width="1.600" height="7.200" fill="#0560a6"/><rect x="8.600" y="7.600" width="1.600" height="2.600" fill="#0560a6"/></svg>
<svg style="left:33px;top:603px" width="13.2" height="13.2" viewBox="0 0 13 13" ><rect width="13" height="13" rx="1.400" fill="#fff"/><rect x="3" y="6" width="1.600" height="4.200" fill="#0560a6"/><rect x="5.800" y="3" width="1.600" height="7.200" fill="#0560a6"/><rect x="8.600" y="7.600" width="1.600" height="2.600" fill="#0560a6"/></svg>
<svg style="left:36px;top:567.5px" width="9.8" height="10" viewBox="0 0 9.800 10" ><path d="M4.300 .500A4.600 4.600 0 1 0 8.700 6.700L4.300 5.300z" fill="#fff"/><path d="M5.300 0a4.500 4.500 0 0 1 4.400 4.300H5.300z" fill="#fff"/><path d="M5.500 5.200h4.200a4.400 4.400 0 0 1-.600 1.700z" fill="#fff"/></svg>
<svg style="left:168px;top:533.8px" width="4.5" height="6.6" viewBox="0 0 4.500 6.600" ><path d="M.700 .600l3 2.700-3 2.700" stroke="#fff" stroke-width="1.100" fill="none"/></svg>
<svg style="left:638.8px;top:20.2px" width="10.4" height="9.8" viewBox="0 0 10.400 9.800" ><circle cx="4" cy="3.900" r="3.100" stroke="#666" stroke-width="1.400" fill="none"/><path d="M6.400 6.200l3.100 2.800" stroke="#666" stroke-width="1.600" stroke-linecap="round"/></svg>
<svg style="left:683.4px;top:20.5px" width="9" height="9" viewBox="0 0 9 9" ><path d="M4.500 0v9M0 4.500h9" stroke="#fff" stroke-width="1.300"/></svg>
<svg style="left:986px;top:14.5px" width="18.2" height="21.8" viewBox="0 0 18.200 21.800" ><g stroke="#6e6e6e" stroke-width="1.4" fill="none" stroke-linecap="round"><path d="M3.500 2.700C6.500 .300 11.700 .300 14.700 2.700"/><path d="M1 8.200C2.500 3.400 15.700 3.400 17.200 8.200"/><path d="M2.300 16.500C.500 12.500 2.300 6.400 9.100 6.400s8.200 5.400 7.700 9.200c-.400 2-3.400 2.200-3.800-.300-.300-2.500-1.100-4.900-3.900-4.900"/><path d="M5.300 19.200C3.500 15.900 4.200 9.500 9.100 9.500c3 0 4.600 2.400 4.900 5.600"/><path d="M8.300 21c-1.800-2.200-2.400-8.400.800-8.400 2.300 0 1.700 4.700 4.100 6.500"/><path d="M9.200 15.600c.300 2.400 1.400 4.200 3 5.300"/></g></svg>
<svg style="left:1010.9px;top:13.8px" width="22.4" height="22.4" viewBox="0 0 22.400 22.400" ><circle cx="11.200" cy="11.200" r="10.400" fill="#fbe9ec" stroke="#c6c3ca" stroke-width="1.800"/><circle cx="11.200" cy="11.200" r="8.300" fill="#f23b50"/><text x="11.200" y="13.500" text-anchor="middle" font-family="Liberation Sans,sans-serif" font-weight="700" font-size="6.300" fill="#fff" textLength="11.200" lengthAdjust="spacingAndGlyphs">SOS</text></svg>
<svg style="left:1039.9px;top:19px" width="17.4" height="16" viewBox="0 0 17.400 16" ><path d="M1.200 12.300h15M3.300 12.300c.9-.8 1.100-1.600 1.100-3V6.600C4.400 2.800 6.400 .800 8.700 .800s4.300 2 4.300 5.800v2.700c0 1.400.2 2.200 1.100 3" stroke="#666" stroke-width="1.600" fill="none" stroke-linecap="round"/><path d="M7.300 14.200h2.800a1.400 1.400 0 0 1-2.800 0z" fill="#555"/></svg>
<svg style="left:1044.7px;top:7.8px" width="15.8" height="15.8" viewBox="0 0 15.800 15.800" ><circle cx="7.900" cy="7.900" r="7.900" fill="#f02d2d"/><text x="7.900" y="11.600" text-anchor="middle" font-family="Liberation Sans,sans-serif" font-weight="700" font-size="10.400" fill="#fff" textLength="10.800" lengthAdjust="spacingAndGlyphs">10</text></svg>
<svg style="left:1072.9px;top:10.6px" width="29.4" height="29.4" viewBox="0 0 29.400 29.400" ><defs><clipPath id="avc"><circle cx="14.700" cy="14.700" r="14.700"/></clipPath></defs><circle cx="14.700" cy="14.700" r="14.700" fill="#f1d73d"/><g clip-path="url(#avc)"><path d="M4 29.400c0-5 5-7 10.700-7s10.700 2 10.700 7z" fill="#fbfbf6"/><rect x="12.300" y="18" width="4.800" height="6" fill="#eaa574"/><path d="M12.300 22.500l2.400 2.500 2.400-2.500 1.600 1-2.600 3.500h-2.800l-2.600-3.500z" fill="#fff"/><path d="M14 24.500h1.400l.900 4.900h-3.200z" fill="#e9c832"/><ellipse cx="14.700" cy="13" rx="5.100" ry="6.900" fill="#f2b487"/><path d="M8.600 12.500C7.500 5.500 11 3 15 3c4.500 0 7.300 3 6.100 9.500l-.800-.200C20.500 9.500 19 8.300 17 8c-2.500.600-5.500.400-7-.300-.700 1.200-.900 2.800-.700 4.600z" fill="#3a342f"/></g></svg>
<svg style="left:1094.9px;top:32.6px" width="9.8" height="9.8" viewBox="0 0 9.800 9.800" ><circle cx="4.900" cy="4.900" r="4.900" fill="#43a047"/><path d="M2.400 5l1.800 1.800 3.300-3.600" stroke="#fff" stroke-width="1.300" fill="none"/></svg>
<svg style="left:1263px;top:24px" width="4.6" height="2.4" viewBox="0 0 10 5" ><path d="M0 0h10L5 5z" fill="#222"/></svg>
<svg style="left:212.6px;top:68.5px" width="12.6" height="12.6" viewBox="0 0 12.600 12.600" ><rect x="0.0" y="0.0" width="3.400" height="3.400" fill="#fff"/><rect x="4.6" y="0.0" width="3.400" height="3.400" fill="#fff"/><rect x="9.2" y="0.0" width="3.400" height="3.400" fill="#fff"/><rect x="0.0" y="4.6" width="3.400" height="3.400" fill="#fff"/><rect x="4.6" y="4.6" width="3.400" height="3.400" fill="#fff"/><rect x="9.2" y="4.6" width="3.400" height="3.400" fill="#fff"/><rect x="0.0" y="9.2" width="3.400" height="3.400" fill="#fff"/><rect x="4.6" y="9.2" width="3.400" height="3.400" fill="#fff"/><rect x="9.2" y="9.2" width="3.400" height="3.400" fill="#fff"/></svg>
<svg style="left:1116.5px;top:174.4px" width="13.6" height="16" viewBox="0 0 13.600 16" ><path d="M.900 .800h11.800L8.500 6.800v8L5.100 12.200V6.800z" stroke="#fff" stroke-width="1.500" fill="none" stroke-linejoin="round"/></svg>
<svg style="left:1190.7px;top:176.4px" width="9.3" height="9.3" viewBox="0 0 9.300 9.300" ><path d="M4.650 0v9.300M0 4.650h9.300" stroke="#fff" stroke-width="1.250"/></svg>
<svg style="left:1200px;top:310.2px" width="17.4" height="17.6" viewBox="0 0 17.400 17.600" ><rect x="0" y="0" width="16" height="2.100" fill="#3b8ee2"/><rect x="0" y="4" width="16" height="1.800" fill="#3b8ee2"/><rect x="0" y="7.800" width="8.600" height="1.700" fill="#3b8ee2"/><rect x="0" y="11.400" width="7" height="1.600" fill="#3b8ee2"/><circle cx="12.600" cy="12.800" r="5.100" fill="#f1f1f1"/><circle cx="12.600" cy="12.800" r="4.500" fill="#3b8ee2"/><path d="M10.400 12.900l1.600 1.600 2.900-3.200" stroke="#fff" stroke-width="1.200" fill="none"/></svg>
<svg style="left:1224.75px;top:312.3px" width="15.3" height="14.2" viewBox="0 0 15.300 14.200" ><path d="M.800 .800h13.700v9.600H3.600L.800 13z" stroke="#3b8ee2" stroke-width="1.500" fill="none" stroke-linejoin="miter"/><path d="M3.600 4h8.200M3.600 6.800h6" stroke="#3b8ee2" stroke-width="1.400"/></svg>
<svg style="left:1200px;top:362.7px" width="17.4" height="17.6" viewBox="0 0 17.400 17.600" ><rect x="0" y="0" width="16" height="2.100" fill="#3b8ee2"/><rect x="0" y="4" width="16" height="1.800" fill="#3b8ee2"/><rect x="0" y="7.800" width="8.600" height="1.700" fill="#3b8ee2"/><rect x="0" y="11.400" width="7" height="1.600" fill="#3b8ee2"/><circle cx="12.600" cy="12.800" r="5.100" fill="#f1f1f1"/><circle cx="12.600" cy="12.800" r="4.500" fill="#3b8ee2"/><path d="M10.400 12.900l1.600 1.600 2.900-3.200" stroke="#fff" stroke-width="1.200" fill="none"/></svg>
<svg style="left:1224.75px;top:364.8px" width="15.3" height="14.2" viewBox="0 0 15.300 14.200" ><path d="M.800 .800h13.700v9.600H3.600L.800 13z" stroke="#3b8ee2" stroke-width="1.500" fill="none" stroke-linejoin="miter"/><path d="M3.600 4h8.200M3.600 6.800h6" stroke="#3b8ee2" stroke-width="1.400"/></svg>
<svg style="left:1200px;top:423.0px" width="17.4" height="17.6" viewBox="0 0 17.400 17.600" ><rect x="0" y="0" width="16" height="2.100" fill="#3b8ee2"/><rect x="0" y="4" width="16" height="1.800" fill="#3b8ee2"/><rect x="0" y="7.800" width="8.600" height="1.700" fill="#3b8ee2"/><rect x="0" y="11.400" width="7" height="1.600" fill="#3b8ee2"/><circle cx="12.600" cy="12.800" r="5.100" fill="#f1f1f1"/><circle cx="12.600" cy="12.800" r="4.500" fill="#3b8ee2"/><path d="M10.400 12.900l1.600 1.600 2.900-3.200" stroke="#fff" stroke-width="1.200" fill="none"/></svg>
<svg style="left:1224.75px;top:425.1px" width="15.3" height="14.2" viewBox="0 0 15.300 14.200" ><path d="M.800 .800h13.700v9.600H3.600L.800 13z" stroke="#3b8ee2" stroke-width="1.500" fill="none" stroke-linejoin="miter"/><path d="M3.600 4h8.200M3.600 6.800h6" stroke="#3b8ee2" stroke-width="1.400"/></svg>
<svg style="left:1200px;top:483.2px" width="17.4" height="17.6" viewBox="0 0 17.400 17.600" ><rect x="0" y="0" width="16" height="2.100" fill="#3b8ee2"/><rect x="0" y="4" width="16" height="1.800" fill="#3b8ee2"/><rect x="0" y="7.800" width="8.600" height="1.700" fill="#3b8ee2"/><rect x="0" y="11.400" width="7" height="1.600" fill="#3b8ee2"/><circle cx="12.600" cy="12.800" r="5.100" fill="#f1f1f1"/><circle cx="12.600" cy="12.800" r="4.500" fill="#3b8ee2"/><path d="M10.400 12.900l1.600 1.600 2.900-3.200" stroke="#fff" stroke-width="1.200" fill="none"/></svg>
<svg style="left:1224.75px;top:485.3px" width="15.3" height="14.2" viewBox="0 0 15.300 14.200" ><path d="M.800 .800h13.700v9.600H3.600L.800 13z" stroke="#3b8ee2" stroke-width="1.500" fill="none" stroke-linejoin="miter"/><path d="M3.600 4h8.200M3.600 6.800h6" stroke="#3b8ee2" stroke-width="1.400"/></svg>
<svg style="left:1200px;top:528.0px" width="17.4" height="17.6" viewBox="0 0 17.400 17.600" ><rect x="0" y="0" width="16" height="2.100" fill="#3b8ee2"/><rect x="0" y="4" width="16" height="1.800" fill="#3b8ee2"/><rect x="0" y="7.800" width="8.600" height="1.700" fill="#3b8ee2"/><rect x="0" y="11.400" width="7" height="1.600" fill="#3b8ee2"/><circle cx="12.600" cy="12.800" r="5.100" fill="#f1f1f1"/><circle cx="12.600" cy="12.800" r="4.500" fill="#3b8ee2"/><path d="M10.400 12.900l1.600 1.600 2.900-3.200" stroke="#fff" stroke-width="1.200" fill="none"/></svg>
<svg style="left:1224.75px;top:530.0999999999999px" width="15.3" height="14.2" viewBox="0 0 15.300 14.200" ><path d="M.800 .800h13.700v9.600H3.600L.800 13z" stroke="#3b8ee2" stroke-width="1.500" fill="none" stroke-linejoin="miter"/><path d="M3.600 4h8.200M3.600 6.800h6" stroke="#3b8ee2" stroke-width="1.400"/></svg>
<svg style="left:1200px;top:573.2px" width="17.4" height="17.6" viewBox="0 0 17.400 17.600" ><rect x="0" y="0" width="16" height="2.100" fill="#3b8ee2"/><rect x="0" y="4" width="16" height="1.800" fill="#3b8ee2"/><rect x="0" y="7.800" width="8.600" height="1.700" fill="#3b8ee2"/><rect x="0" y="11.400" width="7" height="1.600" fill="#3b8ee2"/><circle cx="12.600" cy="12.800" r="5.100" fill="#f1f1f1"/><circle cx="12.600" cy="12.800" r="4.500" fill="#3b8ee2"/><path d="M10.400 12.900l1.600 1.600 2.900-3.200" stroke="#fff" stroke-width="1.200" fill="none"/></svg>
<svg style="left:1224.75px;top:575.3px" width="15.3" height="14.2" viewBox="0 0 15.300 14.200" ><path d="M.800 .800h13.700v9.600H3.600L.800 13z" stroke="#3b8ee2" stroke-width="1.500" fill="none" stroke-linejoin="miter"/><path d="M3.600 4h8.200M3.600 6.800h6" stroke="#3b8ee2" stroke-width="1.400"/></svg>
<div class="abs" style="left:0px;top:0px;width:1280px;height:1px;background:#333;"></div>
<div class="abs" style="left:0px;top:0px;width:192px;height:1px;background:#27435c;"></div>
<div class="abs" style="left:0px;top:614.7px;width:1280px;height:1.3px;background:#4a4a4a;"></div>
</div>
</body>
</html>
